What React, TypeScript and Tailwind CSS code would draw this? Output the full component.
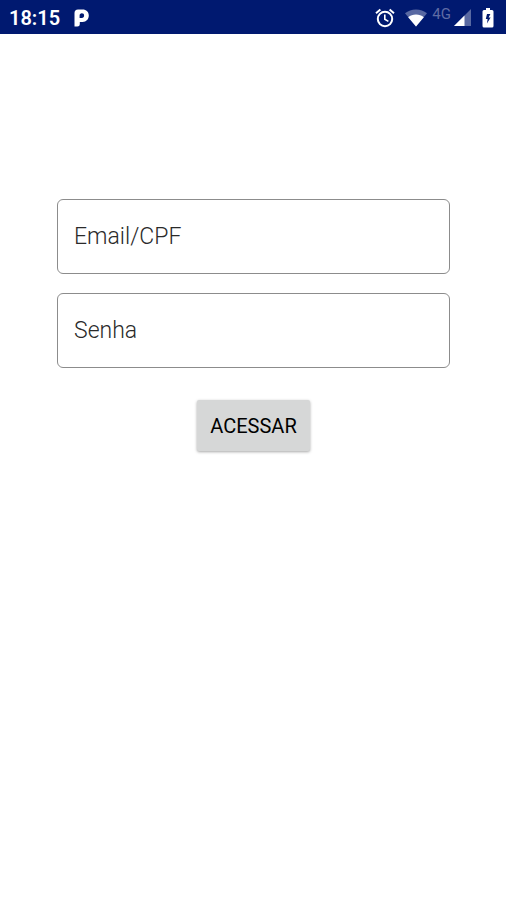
import { useState } from 'react'
import type { FormEvent } from 'react'

interface FieldProps {
  id: string
  label: string
  type: string
  value: string
  onChange: (value: string) => void
}

function Field({ id, label, type, value, onChange }: FieldProps) {
  return (
    <div className="relative w-full">
      <input
        id={id}
        type={type}
        value={value}
        onChange={e => onChange(e.target.value)}
        className="block h-[75px] w-full rounded-md border border-[#8c8c8c] bg-white px-4 text-[23px] text-black focus:outline-none focus:border-[#001970]"
      />
      {value === '' && (
        <label
          htmlFor={id}
          className="absolute inset-0 flex cursor-text items-center px-[17px] pt-0.5 text-[23px] font-light text-[#2a2a2a]"
        >
          {label}
        </label>
      )}
    </div>
  )
}

function StatusBar() {
  return (
    <header className="flex h-[34px] items-center justify-between bg-[#001970] pt-px pr-3 pl-[9px] text-white">
      <div className="flex items-center gap-[14px]">
        <span className="text-xl font-semibold">18:15</span>
        <svg className="h-[18px] w-[15px]" viewBox="0 0 15 18" aria-hidden="true">
          <path
            fill="currentColor"
            fillRule="evenodd"
            d="M4 .5H8.5C12.4 .5 14.8 2.9 14.8 6.6S12.3 13 8.6 13H5.8V15.3Q5.8 17.5 3.4 17.5H.5V4Q.5 .5 4 .5ZM7.8 4.3C6.4 4.3 5.6 5.2 5.6 6.6V9H7.9C9.3 9 10.1 8.1 10.1 6.6S9.3 4.3 7.8 4.3Z"
          />
        </svg>
      </div>

      <div className="flex items-center">
        <svg className="h-5 w-5" viewBox="0 0 20 20" fill="none" stroke="currentColor" aria-hidden="true">
          <circle cx="10" cy="11" r="7.2" strokeWidth="2" />
          <path strokeWidth="2" d="M1 5.2 5.4 1.5M19 5.2 14.6 1.5" />
          <path strokeWidth="1.6" d="M9.8 6.5V11.3L13.4 13.4" />
        </svg>
        <svg className="ml-[10px] h-[18px] w-[22px]" viewBox="0 0 22 18" fill="currentColor" aria-hidden="true">
          <path opacity="0.35" d="M11 0.5C6.8 .5 3 1.9 0 4.3L11 17.5 22 4.3C19 1.9 15.2 .5 11 .5Z" />
          <path d="M11 5.6C8 5.6 5.3 6.6 3.2 8.2L11 17.5 18.8 8.2C16.7 6.6 14 5.6 11 5.6Z" />
        </svg>
        <span className="ml-[5px] pb-2 text-[15px] leading-4 text-[#5f6ba4]">4G</span>
        <svg className="ml-[3px] h-[17px] w-[17px]" viewBox="0 0 17 17" fill="currentColor" aria-hidden="true">
          <path opacity="0.35" d="M17 0V17H0Z" />
          <path d="M10.5 6.5V17H0Z" />
        </svg>
        <svg className="ml-[11px] h-5 w-3" viewBox="0 0 12 20" aria-hidden="true">
          <path
            fill="currentColor"
            d="M4 0H8V2H10Q11.5 2 11.5 3.5V18Q11.5 19.5 10 19.5H2Q.5 19.5 .5 18V3.5Q.5 2 2 2H4Z"
          />
          <path fill="#001970" d="M8.4 6H5L3.8 11H5.6L5 15.5 8.6 9.6H6.6Z" />
        </svg>
      </div>
    </header>
  )
}

export default function App() {
  const [user, setUser] = useState('')
  const [password, setPassword] = useState('')

  const handleSubmit = (e: FormEvent) => {
    e.preventDefault()
  }

  return (
    <div className="min-h-screen bg-white font-['Roboto',sans-serif]">
      <StatusBar />
      <main className="pt-[165px] pr-14 pl-[57px]">
        <form onSubmit={handleSubmit} className="flex flex-col items-center">
          <div className="flex w-full flex-col gap-[19px]">
            <Field id="user" label="Email/CPF" type="text" value={user} onChange={setUser} />
            <Field id="password" label="Senha" type="password" value={password} onChange={setPassword} />
          </div>
          <button
            type="submit"
            className="mt-8 h-[51px] rounded-xs bg-[#d6d7d7] px-[13px] text-xl text-black shadow-[0_1px_3px_rgba(0,0,0,0.35)] active:bg-[#c4c5c5]"
          >
            ACESSAR
          </button>
        </form>
      </main>
    </div>
  )
}
